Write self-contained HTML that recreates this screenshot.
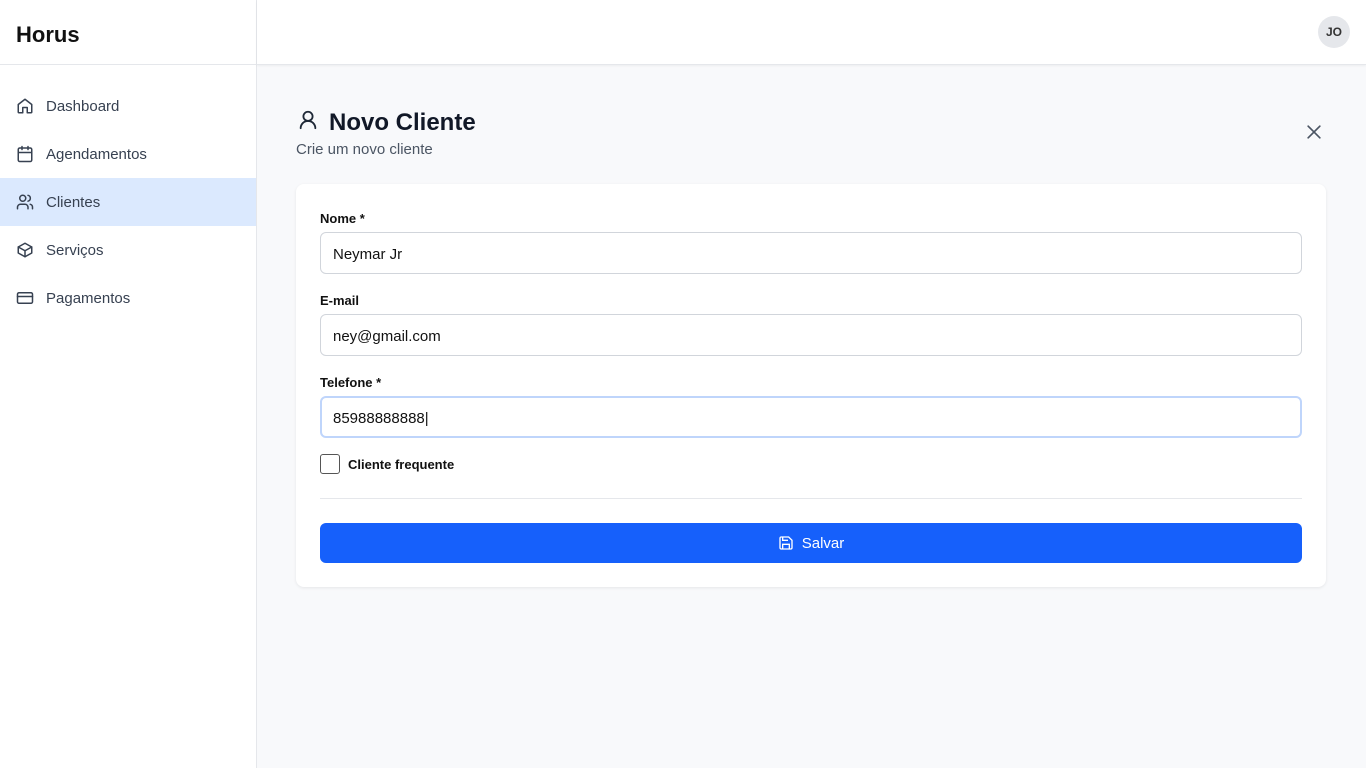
<!DOCTYPE html>
<html><head><meta charset="utf-8"><style>
*{box-sizing:border-box;margin:0;padding:0}
body{width:1366px;height:768px;font-family:"Liberation Sans",sans-serif;background:#f8f9fb;position:relative;overflow:hidden;color:#1f2937}
.side{position:absolute;left:0;top:0;width:257px;height:768px;background:#fff;border-right:1px solid #e5e7eb}
.logo{height:65px;border-bottom:1px solid #e5e7eb;padding:22px 16px;font-size:22px;color:#111;font-weight:bold}
.nav{padding-top:17px}
.item{height:48px;display:flex;align-items:center;padding-left:16px;font-size:15px;color:#374151}
.item svg{width:18px;height:18px;margin-right:12px;stroke:#374151;fill:none;stroke-width:2;stroke-linecap:round;stroke-linejoin:round}
.item.act{background:#dbe9fe}
.top{position:absolute;left:257px;top:0;right:0;height:65px;background:#fff;border-bottom:1px solid #e5e7eb;box-shadow:0 1px 2px rgba(0,0,0,.05)}
.av{position:absolute;right:16px;top:16px;width:32px;height:32px;border-radius:50%;background:#e5e7eb;font-size:12px;font-weight:bold;display:flex;align-items:center;justify-content:center;color:#333}
h1{position:absolute;left:329px;top:109px;font-size:24px;font-weight:bold;color:#111827}
.sub{position:absolute;left:296px;top:141px;font-size:15px;color:#4b5563}
.card{position:absolute;left:296px;top:184px;width:1030px;height:403px;background:#fff;border-radius:8px;box-shadow:0 1px 3px rgba(0,0,0,.08)}
label{position:absolute;left:24px;font-size:13px;font-weight:bold;color:#111}
.in{position:absolute;left:24px;width:982px;height:42px;border:1px solid #d1d5db;border-radius:6px;padding:0 12px;font-size:15px;line-height:43px;color:#111}
.btn{position:absolute;left:24px;top:339px;width:982px;height:40px;background:#1660fb;border-radius:6px;color:#fff;font-size:15px;display:flex;align-items:center;justify-content:center}
</style></head><body>
<div class="side"><div class="logo">Horus</div>
<div class="nav">
<div class="item"><svg viewBox="0 0 24 24"><path d="M3 10l9-7 9 7v10a1 1 0 0 1-1 1h-5v-7H9v7H4a1 1 0 0 1-1-1z"/></svg>Dashboard</div>
<div class="item"><svg viewBox="0 0 24 24"><rect x="3" y="4" width="18" height="18" rx="2"/><path d="M16 2v4M8 2v4M3 10h18"/></svg>Agendamentos</div>
<div class="item act"><svg viewBox="0 0 24 24"><path d="M16 21v-2a4 4 0 0 0-4-4H6a4 4 0 0 0-4 4v2"/><circle cx="9" cy="7" r="4"/><path d="M22 21v-2a4 4 0 0 0-3-3.9M16 3.1a4 4 0 0 1 0 7.8"/></svg>Clientes</div>
<div class="item"><svg viewBox="0 0 24 24"><path d="M21 8l-9-5-9 5v8l9 5 9-5z"/><path d="M3 8l9 5 9-5M12 13v8"/></svg>Serviços</div>
<div class="item"><svg viewBox="0 0 24 24"><rect x="2" y="5" width="20" height="14" rx="2"/><path d="M2 10h20"/></svg>Pagamentos</div>
</div></div>
<div class="top"><div class="av">JO</div></div>
<svg style="position:absolute;left:297px;top:109px" width="22" height="22" viewBox="0 0 24 24" fill="none" stroke="#1f2937" stroke-width="2" stroke-linecap="round"><circle cx="12" cy="8" r="5"/><path d="M20 21a8 8 0 0 0-16 0"/></svg>
<h1>Novo Cliente</h1>
<div class="sub">Crie um novo cliente</div>
<svg style="position:absolute;left:1304px;top:122px" width="20" height="20" viewBox="0 0 24 24" stroke="#4b5563" stroke-width="2" stroke-linecap="round"><path d="M5 5l14 14M19 5L5 19"/></svg>
<div class="card">
<label style="top:27px">Nome *</label><div class="in" style="top:48px">Neymar Jr</div>
<label style="top:109px">E-mail</label><div class="in" style="top:130px">ney@gmail.com</div>
<label style="top:191px">Telefone *</label><div class="in" style="top:212px;border:2px solid #bfd5fb;line-height:41px;padding-left:11px">85988888888|</div>
<div style="position:absolute;left:24px;top:270px;width:20px;height:20px;border:1px solid #555;border-radius:3px"></div>
<label style="left:52px;top:273px">Cliente frequente</label>
<div style="position:absolute;left:24px;top:314px;width:982px;height:1px;background:#e5e7eb"></div>
<div class="btn"><svg width="16" height="16" viewBox="0 0 24 24" fill="none" stroke="#fff" stroke-width="2" style="margin-right:8px"><path d="M5 3h11l5 5v11a2 2 0 0 1-2 2H5a2 2 0 0 1-2-2V5a2 2 0 0 1 2-2z"/><path d="M7 3v5h8M7 21v-7h10v7"/></svg>Salvar</div>
</div>
</body></html>
